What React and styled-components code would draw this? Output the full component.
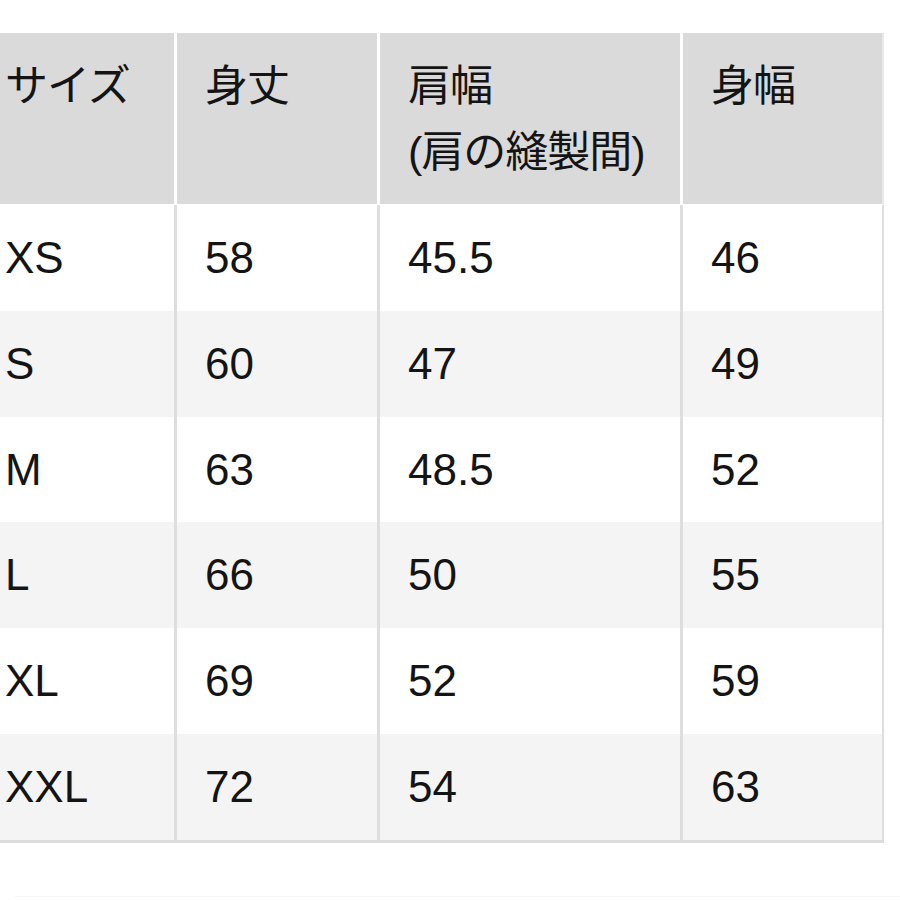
import React from "react";
import styled, { createGlobalStyle } from "styled-components";

const Global = createGlobalStyle`
  html, body { margin: 0; padding: 0; background: #ffffff; }
  body {
    font-family: "Liberation Sans", "Noto Sans CJK JP", sans-serif;
    color: #141414;
    overflow: hidden;
  }
`;

const Page = styled.div`
  width: 900px;
  height: 900px;
  padding-top: 33px;
  box-sizing: border-box;
  overflow: hidden;
  position: relative;
`;

const Table = styled.div`
  display: grid;
  grid-template-columns: 200px 203px 303px 201px;
  grid-template-rows: 172px repeat(6, 105.83px);
  margin-left: -23px;
  width: 907px;
  border-bottom: 3px solid #dcdcdc;
`;

const HeadCell = styled.div`
  box-sizing: border-box;
  background: #dadada;
  padding: 20px 0 0 28px;
  font-size: 43px;
  line-height: 66px;
  letter-spacing: -1px;
  border-right: ${(p) => (p.$last ? "2px solid #e8e8e8" : "3px solid #ffffff")};
  border-bottom: 1px solid #ffffff;
`;

const Cell = styled.div`
  box-sizing: border-box;
  background: ${(p) => (p.$alt ? "#f4f4f4" : "#ffffff")};
  padding-left: 28px;
  display: flex;
  align-items: center;
  font-size: 44px;
  border-right: ${(p) => (p.$last ? "2px solid #dedede" : "3px solid #dedede")};
`;

const Footer = styled.div`
  margin: 53px 0 0 15px;
  border-top: 1px solid #f6f6f6;
`;

const headers = [["サイズ"], ["身丈"], ["肩幅", "(肩の縫製間)"], ["身幅"]];
const rows = [
  ["XS", "58", "45.5", "46"],
  ["S", "60", "47", "49"],
  ["M", "63", "48.5", "52"],
  ["L", "66", "50", "55"],
  ["XL", "69", "52", "59"],
  ["XXL", "72", "54", "63"],
];

export default function App() {
  return (
    <>
      <Global />
      <Page>
        <Table>
          {headers.map((h, i) => (
            <HeadCell key={i} $last={i === 3}>
              {h.map((line, j) => (
                <div key={j}>{line}</div>
              ))}
            </HeadCell>
          ))}
          {rows.map((r, ri) =>
            r.map((v, ci) => (
              <Cell key={ri + "-" + ci} $alt={ri % 2 === 1} $last={ci === 3}>
                {v}
              </Cell>
            ))
          )}
        </Table>
        <Footer />
      </Page>
    </>
  );
}
